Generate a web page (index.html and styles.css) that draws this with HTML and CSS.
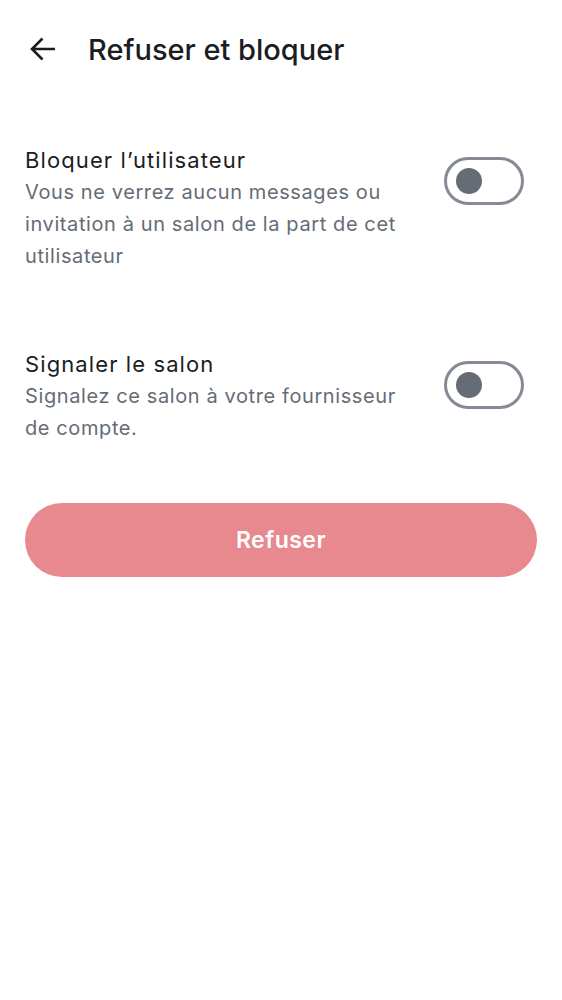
FILE: index.html
```html
<!DOCTYPE html>
<html lang="fr">
<head>
<meta charset="utf-8">
<link rel="stylesheet" href="styles.css">
</head>
<body>
<header class="toolbar">
  <svg class="back" width="26" height="24" viewBox="0 0 26 24"><path d="M2 12H25M12.5 1.5L2 12l10.5 10.5" fill="none" stroke="#1b1d22" stroke-width="2.6" stroke-linejoin="miter"/></svg>
  <h1 class="title">Refuser et bloquer</h1>
</header>
<main class="content">
  <div class="row row-first">
    <div class="texts">
      <div class="row-title">Bloquer l’utilisateur</div>
      <div class="row-sub">Vous ne verrez aucun messages ou invitation à un salon de la part de cet utilisateur</div>
    </div>
    <div class="switch"><span class="thumb"></span></div>
  </div>
  <div class="row row-second">
    <div class="texts">
      <div class="row-title">Signaler le salon</div>
      <div class="row-sub">Signalez ce salon à votre fournisseur de compte.</div>
    </div>
    <div class="switch"><span class="thumb"></span></div>
  </div>
  <button class="refuse">Refuser</button>
</main>
</body>
</html>
```
FILE: styles.css
```css
* { box-sizing: border-box; }
body {
  margin: 0;
  background: #fff;
  font-family: Inter, "Noto Sans", sans-serif;
  color: #1b1d22;
}
.toolbar {
  height: 100px;
  padding-bottom: 2px;
  display: flex;
  align-items: center;
  padding-left: 30px;
}
.back { display: block; }
.title {
  margin: 0 0 0 32px;
  font-size: 29px;
  font-weight: 500;
  letter-spacing: 0;
}
.content { padding: 0 25px; }
.row {
  display: flex;
  align-items: flex-start;
  justify-content: space-between;
}
.row-first { padding-top: 44px; }
.row-second { padding-top: 76px; }
.texts { width: 400px; }
.row-title {
  font-size: 22px;
  line-height: 32px;
  letter-spacing: 1.1px;
}
.row-sub {
  font-size: 20px;
  line-height: 32px;
  letter-spacing: 0.6px;
  color: #656c76;
}
.switch {
  margin-top: 13px;
  margin-right: 13px;
  width: 80px;
  height: 48px;
  border: 3px solid #858a95;
  border-radius: 24px;
  display: flex;
  align-items: center;
  padding-left: 9px;
}
.thumb {
  width: 26px;
  height: 26px;
  border-radius: 50%;
  background: #656c76;
}
.refuse {
  display: block;
  width: 100%;
  margin-top: 59px;
  height: 74px;
  border: none;
  border-radius: 37px;
  background: #e8898f;
  color: #fff;
  font-family: Inter, "Noto Sans", sans-serif;
  font-size: 23px;
  font-weight: 600;
  letter-spacing: 0.5px;
}
```
